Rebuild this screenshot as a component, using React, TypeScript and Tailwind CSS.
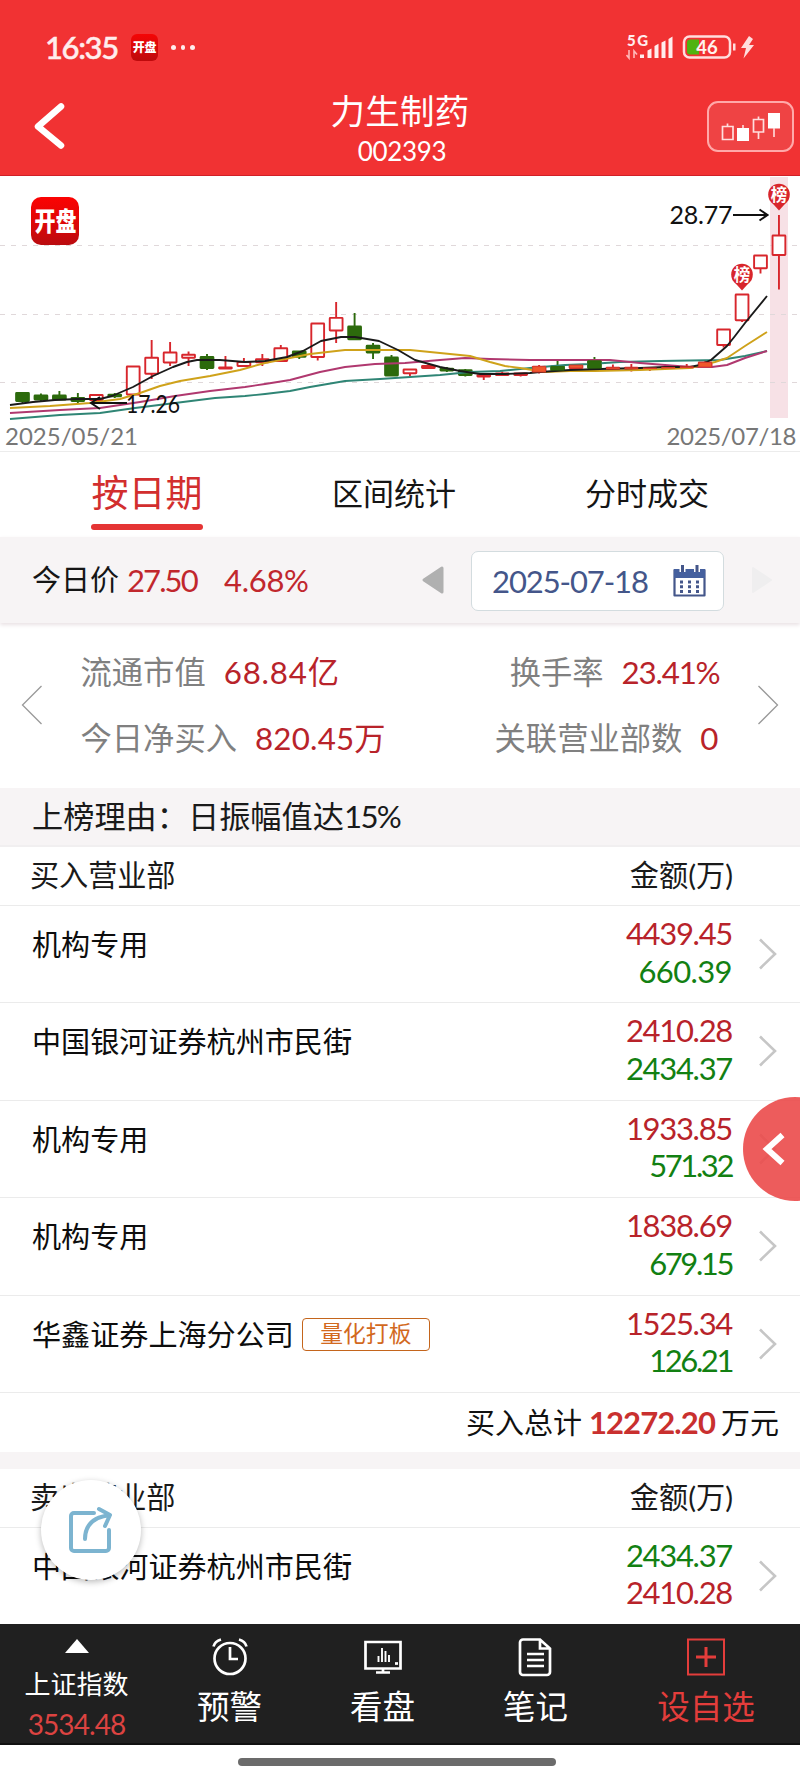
import { ReactNode } from 'react'

type Candle = [
  color: 'r' | 'g',
  top: number,
  bottom: number,
  high: number,
  low: number,
]

interface Broker {
  name: string
  tag?: string
  first: string
  second: string
}

const RED = '#d8262c'
const GREEN = '#2c6a0c'

const candles: Candle[] = [
  ['g', 217, 225, 217, 227],
  ['g', 219.5, 223.5, 217.5, 225],
  ['g', 219.5, 223.5, 215, 224],
  ['g', 222, 225, 217, 227.5],
  ['r', 219, 224, 219, 226],
  ['g', 218.7, 220.3, 217, 222],
  ['r', 190.5, 218.5, 190.5, 218.5],
  ['r', 181.7, 197.7, 164, 203],
  ['r', 176.5, 186.5, 166, 190],
  ['r', 178.7, 181.7, 175.5, 190],
  ['g', 181, 192, 178, 194],
  ['r', 191.5, 192.5, 180, 192],
  ['r', 186, 190, 182, 190],
  ['r', 183.3, 186.3, 178, 190],
  ['r', 172.3, 185, 169, 185],
  ['g', 175.5, 180.8, 175, 183],
  ['r', 147.5, 181, 147.5, 184.5],
  ['r', 141.9, 154.5, 126, 167],
  ['g', 150.5, 163.3, 137, 163],
  ['g', 169.8, 176.5, 167, 183],
  ['g', 181.5, 199.5, 179, 200],
  ['r', 193.5, 197.2, 193.5, 200],
  ['r', 190, 192, 187, 192],
  ['g', 192.7, 194.5, 191, 196],
  ['g', 194.3, 199, 193, 200.5],
  ['r', 199.3, 200.5, 199, 204],
  ['r', 197.4, 199, 195.5, 200],
  ['r', 197.4, 199, 197, 200.5],
  ['r', 190.6, 196, 189, 197.5],
  ['g', 190.5, 194, 184, 195],
  ['r', 189.1, 192, 189, 194],
  ['g', 184.8, 192, 181, 194],
  ['r', 191.7, 193, 188.5, 195],
  ['r', 191.7, 192.8, 188, 195.5],
  ['r', 192, 192.5, 191, 195],
  ['r', 191.4, 192, 190.5, 193],
  ['r', 190.8, 191.6, 188, 192],
  ['r', 186.4, 191, 184.5, 192],
  ['r', 153.5, 169, 153.5, 171.5],
  ['r', 118.5, 144.3, 118.5, 146],
  ['r', 79.5, 92.3, 79.5, 97.5],
  ['r', 59.5, 79, 39, 113.5],
]

const averages = [
  {
    color: '#2f8575',
    points:
      '10,243 60,239 100,237 135,232 175,227 215,222 245,220 265,218 290,215 310,211 345,205 380,203 410,201 440,199 470,196 500,195 530,192 565,189 590,188 620,186 660,185 690,184.5 720,184 745,180 767,175',
  },
  {
    color: '#b0386f',
    points:
      '10,237 60,234 100,232 140,226 175,220 210,215 245,211 265,208 290,204 320,196 345,191 375,188 405,187 440,184 465,182 490,183 530,184 610,184 640,187 665,189 690,191 712,191 727,189 745,182 767,175',
  },
  {
    color: '#cfa21a',
    points:
      '10,232 50,230 90,227 120,223 140,217 160,210 180,205 210,200 240,194 265,187 290,182 310,178 345,174 380,174 410,174 440,177 470,180 490,186 505,190 520,192 545,196 570,195 595,195 640,194 690,192 715,186 727,182 745,170 767,156',
  },
  {
    color: '#1a1a1a',
    points:
      '10,229 33,226 55,224 77,223 100,223 112,220 133,211 153,200 173,191 187,186 197,184 220,184 245,186 265,185 287,181 303,175 321,165 341,161 355,161 379,165 398,174 415,184 440,191 460,195 480,198 505,198 530,197 540,196 570,194 600,193 640,192 665,191 690,191 700,189 711,184 727,170 735,160 745,147 767,120',
  },
]

const buyers: Broker[] = [
  { name: '机构专用', first: '4439.45', second: '660.39' },
  { name: '中国银河证券杭州市民街', first: '2410.28', second: '2434.37' },
  { name: '机构专用', first: '1933.85', second: '571.32' },
  { name: '机构专用', first: '1838.69', second: '679.15' },
  {
    name: '华鑫证券上海分公司',
    tag: '量化打板',
    first: '1525.34',
    second: '126.21',
  },
]

const sellers: Broker[] = [
  { name: '中国银河证券杭州市民街', first: '2434.37', second: '2410.28' },
]

const StatusBar = () => (
  <div className="h-[94px] pt-[1px] pl-[45px] pr-[44px] flex items-center text-[#ffeded]">
    <span className="w-[86px] text-[31px] font-medium tracking-[-1.400px] leading-none [-webkit-text-stroke:0.5px_#ffeded]">
      16:35
    </span>
    <span className="w-[27px] h-[27px] rounded-[6px] bg-linear-to-b from-[#f50505] to-[#bd0a0c] flex items-center justify-center text-white text-[12px] leading-none font-black tracking-[-0.300px]">
      开盘
    </span>
    <span className="ml-[13px] flex gap-[5px]">
      <i className="w-[4.500px] h-[4.500px] rounded-full bg-[#ffeded]" />
      <i className="w-[4.500px] h-[4.500px] rounded-full bg-[#ffeded]" />
      <i className="w-[4.500px] h-[4.500px] rounded-full bg-[#ffeded]" />
    </span>
    <svg className="ml-auto" width="130" height="40" viewBox="0 -6 130 40">
      <text
        x="1"
        y="11.500"
        fill="#ffeded"
        fontSize="15"
        fontWeight="900"
        textLength="21"
      >
        5G
      </text>
      <path
        d="M3 16v8l-2.500-3M8 24v-7l3 3.500"
        stroke="#ffb9b9"
        strokeWidth="1.600"
        fill="none"
      />
      <path
        d="M14 24v-3.500h4v3.500zM21.500 24v-7.500l4-2V24zM28.500 24V12l4-2.200V24zM35.500 24V8.500l4-2V24zM42.500 24V5l4-2.500V24z"
        fill="#ffeded"
      />
      <rect
        x="58"
        y="2.500"
        width="46"
        height="21"
        rx="5.500"
        fill="none"
        stroke="#ffdede"
        strokeWidth="2.500"
      />
      <path d="M64 5.500h9v15h-9a3 3 0 0 1-3-3v-9a3 3 0 0 1 3-3z" fill="#4fb310" />
      <text
        x="81"
        y="19.500"
        textAnchor="middle"
        fill="#fff3ee"
        fontSize="18.500"
        fontWeight="700"
      >
        46
      </text>
      <path d="M107 9.500h2.500v7H107z" fill="#ffdede" />
      <path d="M123 2 115 14h5l-2.500 10.500L128 11h-5l4-6z" fill="#ffdede" />
    </svg>
  </div>
)

const Header = () => (
  <header className="h-[176px] bg-[#f13233] border-b border-[#d02027]">
    <StatusBar />
    <div className="h-[81px] pl-[33px] pr-[6px] flex items-center justify-between">
      <svg
        className="w-[87px] mt-[-17px]"
        height="48"
        viewBox="0 0 87 48"
        fill="none"
        stroke="#fff"
        strokeWidth="6.500"
        strokeLinecap="round"
        strokeLinejoin="round"
      >
        <path d="M28 4.500 5 24.500l23 19" />
      </svg>
      <div className="mt-[-8px] mr-[27px] text-white text-center">
        <h1 className="text-[34.500px] leading-[40px] tracking-[0.200px]">
          力生制药
        </h1>
        <p className="text-[26px] leading-[40px] pl-1 tracking-[-0.300px]">
          002393
        </p>
      </div>
      <div className="mt-[-16px] w-[87px] h-[51px] rounded-[11px] border-2 border-[#ffa9a9] bg-[#ef4344] flex items-center justify-center">
        <svg width="60" height="32" viewBox="0 0 60 32" fill="none" stroke="#ffdede">
          <path
            d="M1.500 15.500h10.500v13H1.500zM6.500 15.500v-3M32.500 8.500h10v12.500h-10zM37.500 8.500V5.500M37.500 21v7"
            strokeWidth="1.700"
          />
          <path d="M16 17h12v13H16zM47 2h12v15.500H47z" fill="#fff" stroke="none" />
          <path d="M22 17v-3M53 17v9" strokeWidth="1.600" />
        </svg>
      </div>
    </div>
  </header>
)

const Pin = ({ x, y }: { x: number; y: number }) => (
  <g transform={`translate(${x} ${y})`}>
    <path d="M-10 5 0 16 10 5z" fill={RED} />
    <circle r="10.800" fill={RED} />
    <text
      y="6"
      textAnchor="middle"
      fontSize="16.500"
      fontWeight="700"
      fill="#fff"
    >
      榜
    </text>
  </g>
)

const Chart = () => (
  <svg
    className="block shrink-0 bg-white"
    width="800"
    height="275"
    viewBox="0 0 800 275"
  >
    <rect x="770" y="1" width="18" height="241" fill="#f7e1e6" />
    <path
      d="M0 69.500h800M0 138.500h800M0 206.500h800"
      stroke="#e0d8da"
      strokeWidth="1"
      strokeDasharray="5 6"
    />
    {candles.map(([color, top, bottom, high, low], i) => {
      const x = 22.5 + i * 18.45
      const stroke = color === 'r' ? RED : GREEN

      return (
        <g key={i} stroke={stroke} strokeWidth="1.900">
          <path d={`M${x} ${high}V${top}M${x} ${bottom}V${low}`} />
          <rect
            x={x - 6.4}
            y={top}
            width="12.800"
            height={bottom - top}
            rx="0.500"
            fill={color === 'r' ? '#fff' : GREEN}
          />
        </g>
      )
    })}
    {averages.map(({ color, points }) => (
      <polyline
        key={color}
        points={points}
        fill="none"
        stroke={color}
        strokeWidth="1.900"
        strokeLinejoin="round"
      />
    ))}
    {candles.slice(28, 38).map(([color, top, bottom], i) => (
      <rect
        key={i}
        x={532.7 + i * 18.45}
        y={top}
        width="12.800"
        height={bottom - top}
        fill={color === 'r' ? '#f0582c' : GREEN}
        stroke={color === 'r' ? '#dd3a2c' : GREEN}
        strokeWidth="1"
      />
    ))}
    <Pin x={779} y={18.5} />
    <Pin x={742} y={98.5} />
    <g fill="none" stroke="#111" strokeWidth="2">
      <path d="M733 39h34M759.500 33.500l8 5.500-8 5.500" />
      <path d="M127 227H92M100 221l-9 6 9 6" />
    </g>
    <g className="[font-kerning:none]" fill="#111">
      <text x="669.500" y="48" fontSize="25" textLength="63">
        28.77
      </text>
      <text
        x="126"
        y="236.500"
        fontSize="24.500"
        textLength="54"
        lengthAdjust="spacingAndGlyphs"
      >
        17.26
      </text>
    </g>
    <g fill="#777" fontSize="24">
      <text x="5" y="269" textLength="133">
        2025/05/21
      </text>
      <text x="666.500" y="269" textLength="130">
        2025/07/18
      </text>
    </g>
    <defs>
      <linearGradient id="logo" x1="0" y1="0" x2="0" y2="1">
        <stop offset="0" stopColor="#fb0303" />
        <stop offset="0.550" stopColor="#dd0707" />
        <stop offset="1" stopColor="#b90c10" />
      </linearGradient>
    </defs>
    <rect x="31" y="21" width="48" height="48" rx="10" fill="url(#logo)" />
    <text
      x="34.500"
      y="54.500"
      fontSize="26"
      fontWeight="900"
      fill="#fff"
      textLength="42"
      lengthAdjust="spacingAndGlyphs"
    >
      开盘
    </text>
  </svg>
)

const Tabs = () => (
  <nav className="h-[86px] shrink-0 border-t border-[#ececec] grid grid-cols-[294px_200px_306px] justify-items-center text-[31px] text-[#151515]">
    <span className="pt-[16px] flex flex-col items-center text-[#d22e2e] text-[37px] leading-[50px]">
      按日期
      <i className="mt-[6px] w-[112px] h-[6px] rounded-full bg-[#e53434]" />
    </span>
    <span className="leading-[83px]">区间统计</span>
    <span className="leading-[83px]">分时成交</span>
  </nav>
)

const PriceBar = () => (
  <div className="h-[86px] shrink-0 bg-[#f7f4f5] shadow-[0_2px_4px_#e9e1e4] flex items-center text-[29px] relative">
    <span className="w-[95px] ml-[32px] text-[#151515]">今日价</span>
    <span className="w-[97px] text-[#c1272d] text-[31px] tracking-[-1.900px]">
      27.50
    </span>
    <span className="text-[#c1272d] text-[31px] tracking-[-0.300px]">4.68%</span>
    <svg className="ml-auto mr-[27px]" width="22" height="28" viewBox="0 0 22 28">
      <path
        d="M20 2v24L2 14z"
        fill="#b0b0b0"
        stroke="#b0b0b0"
        strokeWidth="3"
        strokeLinejoin="round"
      />
    </svg>
    <div className="mt-[2px] w-[253px] h-[60px] rounded-[7px] border border-[#d3dcdf] bg-white flex items-center pl-[20px] pr-[16px] justify-between text-[#44568a] text-[31px]">
      <span className="tracking-[-1.100px]">2025-07-18</span>
      <svg width="35" height="33" viewBox="0 0 35 33">
        <path
          d="M2.500 5h30v25.500h-30z"
          fill="#fff"
          stroke="#44568a"
          strokeWidth="2.200"
          strokeLinejoin="round"
        />
        <path d="M2 4h31v9H2z" fill="#45609e" />
        <path d="M10.500 0v7M25 0v7" stroke="#fff" strokeWidth="6" />
        <path d="M10.500 0v7M25 0v7" stroke="#44568a" strokeWidth="3" />
        <path
          d="M8 17h20M8 21.700h20M8 26.400h20"
          stroke="#44568a"
          strokeWidth="3"
          strokeDasharray="3 5"
        />
      </svg>
    </div>
    <svg className="ml-[27px] mr-[27px]" width="22" height="28" viewBox="0 0 22 28">
      <path
        d="M2 2v24l18-12z"
        fill="#efeeef"
        stroke="#efeeef"
        strokeWidth="2"
        strokeLinejoin="round"
      />
    </svg>
  </div>
)

const Metric = ({ label, children }: { label: string; children: ReactNode }) => (
  <div className="flex gap-[18px] leading-[66px] text-[31.300px]">
    <span className="text-[#808080]">{label}</span>
    <span className="text-[#b8232a]">{children}</span>
  </div>
)

const Metrics = () => (
  <section className="h-[165px] shrink-0 flex items-center justify-between px-[21px] pb-[2px]">
    <svg width="22" height="40" viewBox="0 0 22 40" fill="none" stroke="#999">
      <path d="M20.500 1 1.500 20l19 19" strokeWidth="1.300" />
    </svg>
    <div className="w-[639px] flex justify-between">
      <div>
        <Metric label="流通市值">
          <span className="tracking-[0.800px]">68.84亿</span>
        </Metric>
        <Metric label="今日净买入">
          <span className="tracking-[0.200px]">820.45万</span>
        </Metric>
      </div>
      <div className="flex flex-col items-end">
        <Metric label="换手率">
          <span className="tracking-[-1.200px]">23.41%</span>
        </Metric>
        <Metric label="关联营业部数">
          <span className="mr-[1px]">0</span>
        </Metric>
      </div>
    </div>
    <svg width="22" height="40" viewBox="0 0 22 40" fill="none" stroke="#999">
      <path d="m1.500 1 19 19-19 19" strokeWidth="1.300" />
    </svg>
  </section>
)

const ListHead = ({ title }: { title: string }) => (
  <div className="h-[59px] shrink-0 pl-[30px] pr-[67px] pb-[3px] border-b border-[#ebebeb] flex items-center justify-between text-[29.200px] text-[#1a1a1a]">
    <span className="tracking-[-0.100px]">{title}</span>
    <span>金额(万)</span>
  </div>
)

// short amounts with a narrow "1" are set tighter than the others
const amountSpacing = (amount: string) => {
  if (amount.length > 6) return 'tracking-[-1.300px]'
  return amount.includes('1') ? 'tracking-[-2.400px]' : 'tracking-[-0.600px]'
}

const Amount = ({ value, color }: { value: string; color: string }) => (
  <span className={`${color} ${amountSpacing(value)}`}>{value}</span>
)

const BrokerRow = ({ broker, sell }: { broker: Broker; sell?: boolean }) => (
  <div className="h-[97.400px] shrink-0 pl-[32px] pr-[22px] border-b border-[#ebebeb] flex text-[#0d0d0d] text-[29.100px]">
    <span className="leading-[77px]">{broker.name}</span>
    {broker.tag && (
      <span className="mt-[22px] ml-[8px] w-[128px] h-[33px] rounded-[4px] border-[1.500px] border-[#c4651c] text-[#d2691e] text-[22.800px] leading-[29px] text-center">
        {broker.tag}
      </span>
    )}
    <div className="ml-auto mt-[9px] flex flex-col items-end text-[31px] leading-[37.500px]">
      <Amount
        value={broker.first}
        color={sell ? 'text-[#128012]' : 'text-[#b8232a]'}
      />
      <Amount
        value={broker.second}
        color={sell ? 'text-[#b8232a]' : 'text-[#128012]'}
      />
    </div>
    <svg className="ml-[26px] mt-[32px]" width="20" height="32" viewBox="0 0 20 32">
      <path
        d="m2 1.500 15 14.500L2 30.500"
        fill="none"
        stroke="#c6c6c6"
        strokeWidth="2.600"
      />
    </svg>
  </div>
)

const NavItem = ({ label, children }: { label: string; children: ReactNode }) => (
  <div className="flex flex-col items-center pt-[13px]">
    <svg
      width="38"
      height="40"
      viewBox="0 0 38 40"
      fill="none"
      stroke="currentColor"
      strokeWidth="2.700"
    >
      {children}
    </svg>
    <span className="mt-[8px] text-[32.500px] leading-[44px]">{label}</span>
  </div>
)

const BottomNav = () => (
  <footer>
    <div className="h-[121px] bg-[#202020] border-b-2 border-[#111] text-white grid grid-cols-[153px_153px_153px_153px_188px]">
      <div className="flex flex-col items-center pt-[15px]">
        <svg width="24" height="14" viewBox="0 0 24 14">
          <path d="M12 0 24 14H0z" fill="#fff" />
        </svg>
        <span className="mt-[11px] text-[26px] leading-[41px]">上证指数</span>
        <span className="text-[28px] leading-[39px] tracking-[-0.900px] text-[#dc4341]">
          3534.48
        </span>
      </div>
      <NavItem label="预警">
        <circle cx="19" cy="21.500" r="15.500" />
        <path d="M19 10v12h8M2.500 9.500c1-4 4-6 7.500-7M35.500 9.500c-1-4-4-6-7.500-7" />
      </NavItem>
      <NavItem label="看盘">
        <path d="M1.500 5h35v26.500h-35zM19 31.500V35M12 35.500h14" />
        <path d="M14.500 25v-6M18 25V11M21.500 25V14M25 25v-7" strokeWidth="1.900" />
        <path d="M31 26.500h3" />
      </NavItem>
      <NavItem label="笔记">
        <path d="M6 2.500h17l10 9V35a3 3 0 0 1-3 3H6a3 3 0 0 1-3-3V5.500a3 3 0 0 1 3-3zM23 2.500v9h10M10 17h17M10 23h17M10 29h17" />
      </NavItem>
      <div className="text-[#e33d3b]">
        <NavItem label="设自选">
          <path d="M1 2.500h36v35H1z" strokeWidth="2" />
          <path d="M19 10v20M9 20h20" strokeWidth="3" />
        </NavItem>
      </div>
    </div>
    <div className="h-[33px] pr-[6px] bg-white flex justify-center items-center">
      <i className="w-[318px] h-[8px] rounded-full bg-[#6b6b6b]" />
    </div>
  </footer>
)

const App = () => (
  <main className="relative w-[800px] h-[1778px] overflow-hidden bg-white font-[Lato,'Noto_Sans_CJK_SC',sans-serif]">
    <div className="h-[1624px] overflow-hidden flex flex-col">
      <Header />
      <Chart />
      <Tabs />
      <PriceBar />
      <Metrics />
      <div className="h-[59px] shrink-0 bg-[#f7f4f5] border-b-2 border-[#f1eff0] pl-[32px] text-[31.200px] leading-[57px] text-[#1a1a1a]">
        上榜理由：日振幅值达<span className="tracking-[-1.600px]">15%</span>
      </div>
      <ListHead title="买入营业部" />
      {buyers.map((broker, i) => (
        <BrokerRow key={i} broker={broker} />
      ))}
      <div className="h-[59px] shrink-0 pr-[21px] flex items-center justify-end text-[29px] text-[#111]">
        买入总计
        <b className="ml-[7px] mr-[6px] text-[31px] tracking-[-0.900px] text-[#c9302f]">
          12272.20
        </b>
        万元
      </div>
      <div className="h-[17px] shrink-0 bg-[#f7f4f5]" />
      <ListHead title="卖出营业部" />
      {sellers.map((broker, i) => (
        <BrokerRow key={i} broker={broker} sell />
      ))}
    </div>
    <BottomNav />

    <button className="absolute left-[743px] top-[1097px] w-[104px] h-[104px] rounded-full bg-[#eb4a4a]/90">
      <svg className="ml-[19px]" width="24" height="34" viewBox="0 0 24 34">
        <path
          d="M20.500 3 5 17l15.500 14"
          fill="none"
          stroke="#fff"
          strokeWidth="6"
        />
      </svg>
    </button>
    <button className="absolute left-[41px] top-[1480px] w-[100px] h-[100px] rounded-full bg-white shadow-[0_2px_6px_#00000045] flex items-center justify-center">
      <svg
        width="46"
        height="50"
        viewBox="0 0 46 50"
        fill="none"
        stroke="#7cb4d0"
        strokeWidth="4"
        strokeLinecap="round"
        strokeLinejoin="round"
      >
        <path d="M26 8H6a3 3 0 0 0-3 3v32a3 3 0 0 0 3 3h32a3 3 0 0 0 3-3V25" />
        <path d="M17 34c0-14 9-22 25-24M31 4l11 6-5 11" />
      </svg>
    </button>
  </main>
)

export default App
